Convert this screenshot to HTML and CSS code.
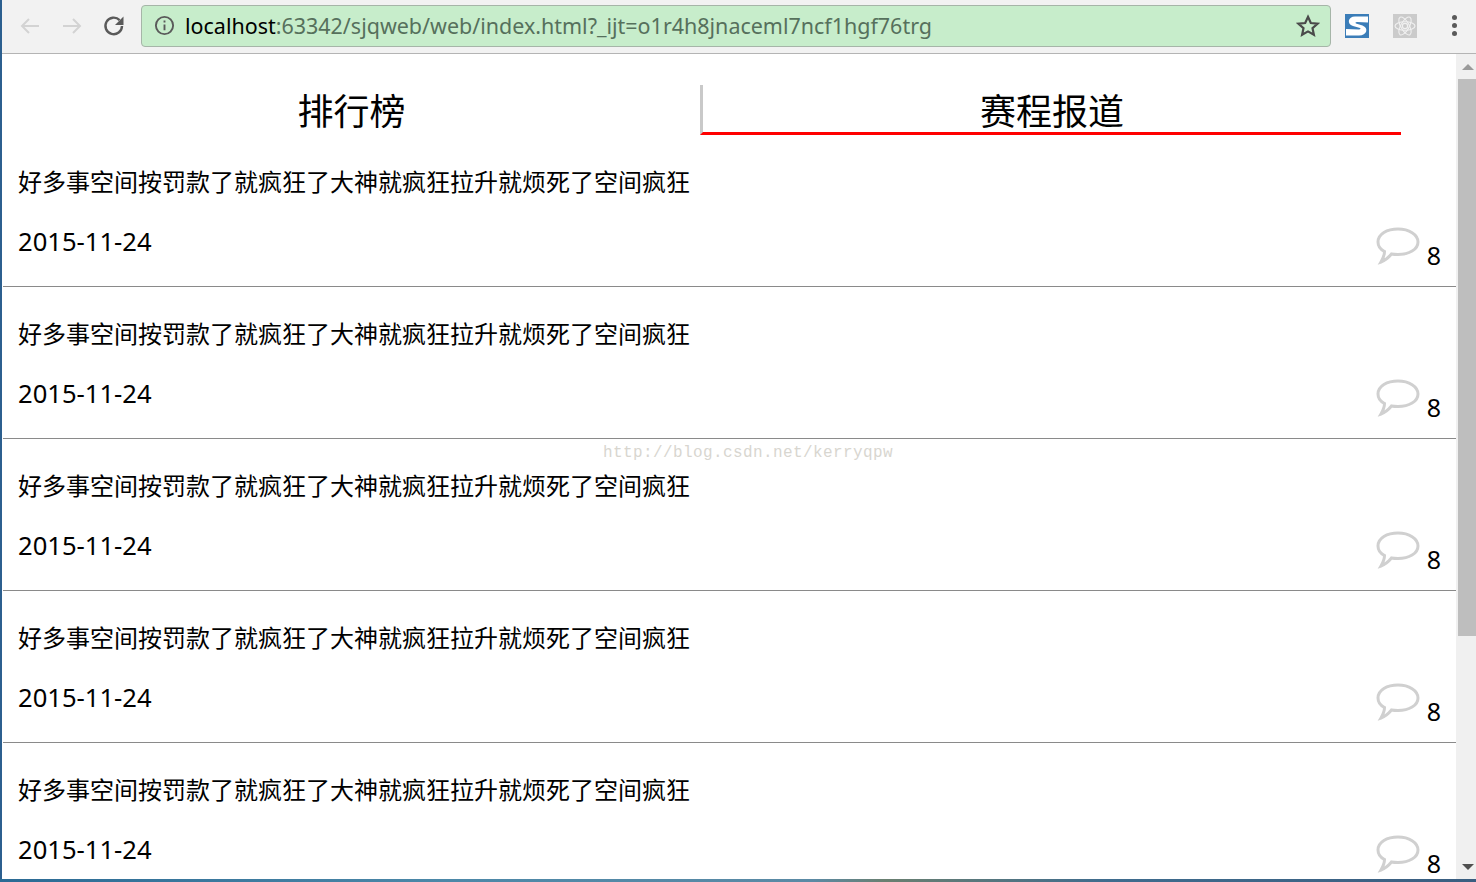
FILE: index.html
```html
<!DOCTYPE html>
<html lang="zh">
<head>
<meta charset="utf-8">
<title>赛程报道</title>
<link rel="stylesheet" href="styles.css">
</head>
<body>
<div class="window">
  <header class="toolbar">
    <svg class="nav nav-back" viewBox="0 0 24 24"><path d="M21 12H4M11 5l-7 7 7 7"/></svg>
    <svg class="nav nav-forward" viewBox="0 0 24 24"><path d="M3 12h17M13 5l7 7-7 7"/></svg>
    <svg class="nav nav-reload" viewBox="0 0 24 24"><path d="M20 12a8.300 8.300 0 1 1-2.400-5.900"/><path class="solid" d="M21.500 2.500v8.500H13z"/></svg>
    <div class="omnibox">
      <svg class="info" viewBox="0 0 20 20"><circle cx="10" cy="10" r="8.200"/><path d="M10 9v5.600M10 5.200v2"/></svg>
      <div class="url"><span class="host">localhost</span>:63342/sjqweb/web/index.html?_ijt=o1r4h8jnaceml7ncf1hgf76trg</div>
      <svg class="star" viewBox="0 0 24 24"><path d="M12 2.800l2.800 6.200 6.700.7-5 4.500 1.400 6.600-5.900-3.400-5.900 3.400 1.400-6.600-5-4.500 6.700-.7z"/></svg>
    </div>
    <svg class="ext ext-s" viewBox="0 0 24 24"><rect width="24" height="24" fill="#3b7db8"/><path d="M23 2.500H10C3 2.500 1.500 10 8 12l7 2c1 .6.500 1.500-1 1.500L1 15v6.500h13c8 0 10-7.500 3.500-10L11 9.500c-1-.6-.5-1.500 1-1.500l11 .5z" fill="#fff"/></svg>
    <svg class="ext ext-atom" viewBox="0 0 24 24"><rect width="24" height="24" fill="#cbcbcb"/><g fill="none" stroke="#f1f1f1" stroke-width="1.100"><ellipse cx="12" cy="12" rx="10" ry="4.200"/><ellipse cx="12" cy="12" rx="10" ry="4.200" transform="rotate(60 12 12)"/><ellipse cx="12" cy="12" rx="10" ry="4.200" transform="rotate(120 12 12)"/><circle cx="12" cy="12" r="2.600"/></g></svg>
    <div class="menu"><i></i><i></i><i></i></div>
  </header>
  <div class="viewport">
    <main class="page">
      <nav class="tabs">
        <div class="tab">排行榜</div>
        <div class="tab tab-active">赛程报道</div>
      </nav>
      <article class="item">
        <h2 class="item-title">好多事空间按罚款了就疯狂了大神就疯狂拉升就烦死了空间疯狂</h2>
        <div class="item-foot">
          <span class="date">2015-11-24</span>
          <span class="comments"><svg class="bubble" viewBox="0 0 44 38"><path d="M22 2C11 2 2 7 2 15c0 4 2.500 7.500 6.500 9.500 0 3.500-1.500 7-3.500 10.500 4-1.500 8-5 10.500-8 2 .4 4.300.5 6.500.5 11 0 20-5 20-12.500S33 2 22 2z"/></svg><span class="count">8</span></span>
        </div>
      </article>
      <article class="item">
        <h2 class="item-title">好多事空间按罚款了就疯狂了大神就疯狂拉升就烦死了空间疯狂</h2>
        <div class="item-foot">
          <span class="date">2015-11-24</span>
          <span class="comments"><svg class="bubble" viewBox="0 0 44 38"><path d="M22 2C11 2 2 7 2 15c0 4 2.500 7.500 6.500 9.500 0 3.500-1.500 7-3.500 10.500 4-1.500 8-5 10.500-8 2 .4 4.300.5 6.500.5 11 0 20-5 20-12.500S33 2 22 2z"/></svg><span class="count">8</span></span>
        </div>
      </article>
      <article class="item">
        <h2 class="item-title">好多事空间按罚款了就疯狂了大神就疯狂拉升就烦死了空间疯狂</h2>
        <div class="item-foot">
          <span class="date">2015-11-24</span>
          <span class="comments"><svg class="bubble" viewBox="0 0 44 38"><path d="M22 2C11 2 2 7 2 15c0 4 2.500 7.500 6.500 9.500 0 3.500-1.500 7-3.500 10.500 4-1.500 8-5 10.500-8 2 .4 4.300.5 6.500.5 11 0 20-5 20-12.500S33 2 22 2z"/></svg><span class="count">8</span></span>
        </div>
      </article>
      <article class="item">
        <h2 class="item-title">好多事空间按罚款了就疯狂了大神就疯狂拉升就烦死了空间疯狂</h2>
        <div class="item-foot">
          <span class="date">2015-11-24</span>
          <span class="comments"><svg class="bubble" viewBox="0 0 44 38"><path d="M22 2C11 2 2 7 2 15c0 4 2.500 7.500 6.500 9.500 0 3.500-1.500 7-3.500 10.500 4-1.500 8-5 10.500-8 2 .4 4.300.5 6.500.5 11 0 20-5 20-12.500S33 2 22 2z"/></svg><span class="count">8</span></span>
        </div>
      </article>
      <article class="item">
        <h2 class="item-title">好多事空间按罚款了就疯狂了大神就疯狂拉升就烦死了空间疯狂</h2>
        <div class="item-foot">
          <span class="date">2015-11-24</span>
          <span class="comments"><svg class="bubble" viewBox="0 0 44 38"><path d="M22 2C11 2 2 7 2 15c0 4 2.500 7.500 6.500 9.500 0 3.500-1.500 7-3.500 10.500 4-1.500 8-5 10.500-8 2 .4 4.300.5 6.500.5 11 0 20-5 20-12.500S33 2 22 2z"/></svg><span class="count">8</span></span>
        </div>
      </article>
      <div class="watermark">http://blog.csdn.net/kerryqpw</div>
    </main>
    <aside class="scrollbar">
      <div class="arrow arrow-up"></div>
      <div class="track"><div class="thumb"></div></div>
      <div class="arrow arrow-down"></div>
    </aside>
  </div>
  <footer class="taskbar-edge"></footer>
</div>
</body>
</html>
```
FILE: styles.css
```css
* { box-sizing: border-box; }
html, body { margin: 0; height: 100%; overflow: hidden; background: #fff; }
.window {
  width: 1476px; height: 882px; display: flex; flex-direction: column;
  border-left: 2px solid #2c5f8f;
  font-family: "Noto Sans", "Noto Sans CJK SC", sans-serif;
  color: #000;
}
.toolbar {
  height: 54px; flex: none; display: flex; align-items: center;
  padding: 0 0 2px 16px; background: #f2f2f2; border-bottom: 1px solid #b4b4b4;
}
.nav { width: 24px; height: 24px; fill: none; stroke-width: 2; }
.nav-back { stroke: #d3d3d3; }
.nav-forward { stroke: #d3d3d3; margin-left: 18px; }
.nav-reload { stroke: #5a5a5a; margin-left: 18px; stroke-width: 2.400; }
.nav-reload .solid { fill: #5a5a5a; stroke: none; }
.omnibox {
  width: 1190px; height: 42px; margin-left: 15px; display: flex; align-items: center;
  padding: 0 10px 0 12px; background: #c7edcb; border: 1px solid #a6b5a8; border-radius: 4px;
}
.info { width: 21px; height: 21px; fill: none; stroke: #5a5a5a; stroke-width: 1.800; flex: none; }
.url { flex: 1; margin-left: 10px; font-size: 21.480px; line-height: 30px; color: #56705c; white-space: nowrap; }
.host { color: #000; }
.star { width: 24px; height: 24px; fill: none; stroke: #4a4a4a; stroke-width: 2.200; flex: none; }
.ext { width: 24px; height: 24px; flex: none; }
.ext-s { margin-left: 14px; }
.ext-atom { margin-left: 24px; }
.menu { margin-left: 35px; display: flex; flex-direction: column; gap: 3px; }
.menu i { display: block; width: 5px; height: 5px; border-radius: 50%; background: #5a5a5a; }
.viewport { flex: 1; min-height: 0; display: flex; }
.page { position: relative; flex: 1; min-width: 0; overflow: hidden; padding: 31px 0 0 1px; background: #fff; }
.tabs { display: flex; height: 50px; width: 1398px; }
.tab { width: 697px; text-align: center; font-size: 36px; line-height: 54px; }
.tab-active { width: 701px; border-left: 3px solid #c9c9c9; border-bottom: 3px solid #f00; }
.item { height: 152px; padding: 29px 0 0 15px; border-bottom: 1px solid #8a8a8a; width: 1453px; }
.item-title { margin: 0; font-size: 24px; line-height: 36px; font-weight: 400; white-space: nowrap; }
.item-foot { display: flex; justify-content: space-between; margin-top: 23px; }
.date { font-size: 25.600px; line-height: 36px; margin-top: 1px; }
.comments { display: flex; align-items: flex-start; margin-top: 4px; padding-right: 15px; }
.bubble { width: 44px; height: 38px; fill: #fff; stroke: #d0d0d0; stroke-width: 3; }
.count { font-size: 25px; line-height: 36px; margin-left: 7px; margin-top: 10px; }
.watermark {
  position: absolute; left: 601px; top: 387px; font-family: "Liberation Mono", monospace;
  font-size: 16px; line-height: 24px; letter-spacing: .4px; color: #d8d6d0;
}
.scrollbar { width: 20px; flex: none; display: flex; flex-direction: column; background: #f0f0f0; }
.arrow { height: 25px; flex: none; display: flex; justify-content: center; align-items: center; padding-left: 4px; }
.arrow::before { content: ""; border-left: 6px solid transparent; border-right: 6px solid transparent; }
.arrow-up::before { border-bottom: 6px solid #9a9a9a; }
.arrow-down::before { border-top: 6px solid #505050; }
.track { flex: 1; padding-left: 2px; }
.thumb { height: 557px; background: #bebebe; }
.taskbar-edge { height: 3px; flex: none; margin-left: -2px; background: linear-gradient(90deg, #2b6a94 0%, #4c88a8 30%, #5b8aa5 55%, #6a7f70 60%, #3f6c8e 75%, #3a5e80 100%); }
```
